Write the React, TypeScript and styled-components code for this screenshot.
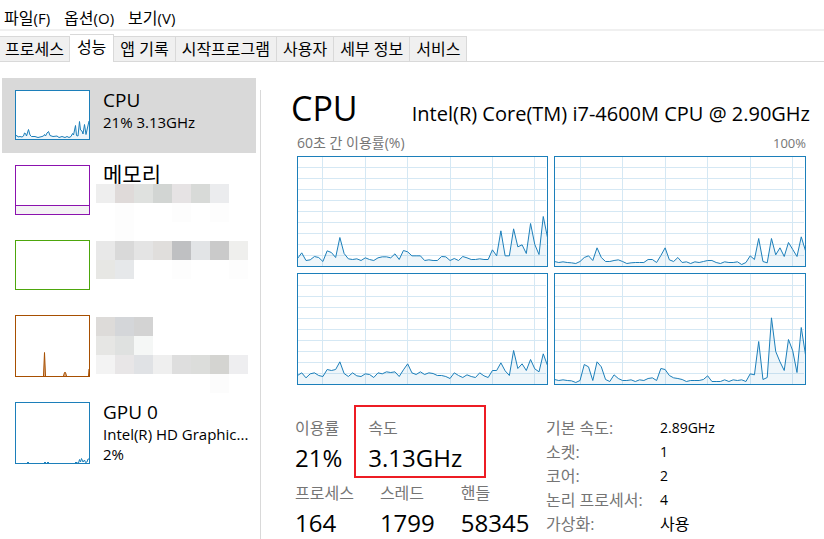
import React from "react";
import styled, { createGlobalStyle, css } from "styled-components";

const LINE = "#1c7fba";

const GlobalStyle = createGlobalStyle`
  *, *::before, *::after { box-sizing: border-box; }
  html { overflow: hidden; }
  body {
    margin: 0;
    background: #fff;
    color: #000;
    font-family: "Open Sans", "Noto Sans CJK KR", sans-serif;
    font-size: 16px;
    font-weight: 400;
  }
  button { font: inherit; color: inherit; margin: 0; cursor: default; }
`;

const Page = styled.div`
  display: flex;
  flex-direction: column;
  min-height: 100vh;
`;

const MenuBar = styled.nav`
  display: flex;
  gap: 14px;
  height: 31px;
  padding: 6px 4px 0;
  border-bottom: 2px solid #f0f0f0;
`;

const MenuButton = styled.button`
  padding: 0;
  border: 0;
  background: none;
  line-height: 24px;
  white-space: nowrap;
`;

const AccessKey = styled.span`
  font-size: 15px;
`;

const TabBar = styled.div`
  display: flex;
  align-items: flex-end;
  height: 31px;
  border-bottom: 1px solid #d9d9d9;
`;

const Tab = styled.button<{ $active?: boolean }>`
  height: 25px;
  padding: 0 6px;
  border: 1px solid #d9d9d9;
  border-width: 1px 1px 0 0;
  background: #f0f0f0;
  line-height: 24px;
  white-space: nowrap;
  &:first-child { padding: 0 5px; }
  ${(p) =>
    p.$active &&
    css`
      height: 28px;
      margin-bottom: -1px;
      padding: 0 7px 3px;
      background: #fff;
    `}
`;

const Body = styled.div`
  display: flex;
  flex: 1;
  padding-top: 16px;
`;

const DeviceList = styled.div`
  position: relative;
  flex: none;
  width: 256px;
  padding-left: 2px;
`;

const Device = styled.button<{ $selected?: boolean }>`
  display: flex;
  align-items: flex-start;
  gap: 13px;
  width: 100%;
  padding: 12px 8px 13px 13px;
  border: 0;
  background: ${(p) => (p.$selected ? "#d9d9d9" : "transparent")};
  text-align: left;
`;

const Thumb = styled.svg<{ $tall?: boolean }>`
  display: block;
  flex: none;
  width: 75px;
  height: ${(p) => (p.$tall ? 62 : 50)}px;
  background: #fff;
`;

const DeviceText = styled.span`
  display: flex;
  flex-direction: column;
  min-width: 0;
  height: 50px;
  font-size: 15px;
  line-height: 20px;
  white-space: nowrap;
`;

const DeviceName = styled.span<{ $hangul?: boolean }>`
  margin-bottom: 2px;
  font-size: ${(p) => (p.$hangul ? 21 : 19)}px;
  line-height: ${(p) => (p.$hangul ? 18 : 20)}px;
`;

const Mosaic = styled.div`
  position: absolute;
  left: 96px;
  top: 106px;
  display: grid;
  grid-template-columns: repeat(8, 19px);
  grid-auto-rows: 19px;
  pointer-events: none;
`;

const Tile = styled.span<{ $color: string }>`
  background: ${(p) => p.$color};
`;

const Details = styled.main`
  flex: 1;
  min-width: 0;
  margin: 12px 0 0 4px;
  padding: 0 18px 0 36px;
  border-left: 1px solid #d9d9d9;
`;

const Header = styled.header`
  display: flex;
  justify-content: space-between;
  align-items: baseline;
  height: 42px;
  margin: 0 -4px 0 -6px;
  line-height: 36px;
  white-space: nowrap;
`;

const Title = styled.h1`
  margin: 0;
  font-size: 34px;
  font-weight: inherit;
`;

const Model = styled.span`
  font-size: 20px;
`;

const Caption = styled.div`
  display: flex;
  justify-content: space-between;
  height: 24px;
  color: #757575;
  font-size: 13px;
  line-height: 22px;
`;

const CaptionName = styled.span`
  font-size: 14px;
`;

const Charts = styled.div`
  display: grid;
  grid-template-columns: 251fr 252fr;
  grid-template-rows: 111px 112px;
  gap: 6px;
`;

const Plot = styled.svg`
  display: block;
  width: 100%;
  height: 100%;
`;

const Footer = styled.div`
  display: flex;
  margin: 31px 0 0 -2px;
`;

const Stats = styled.div`
  display: flex;
  flex-direction: column;
  gap: 5px;
  width: 251px;
`;

const StatRow = styled.dl`
  display: flex;
  gap: 26px;
  margin: 0;
`;

const Stat = styled.div`
  position: relative;
`;

const StatLabel = styled.dt`
  color: #757575;
  line-height: 24px;
`;

const StatValue = styled.dd`
  margin: 0;
  font-size: 24px;
  line-height: 36px;
`;

const Highlight = styled.span`
  position: absolute;
  left: -14px;
  top: -11px;
  width: 132px;
  height: 73px;
  border: 2px solid #ed1c24;
`;

const Specs = styled.dl`
  display: grid;
  grid-template-columns: 114px auto;
  grid-auto-rows: 24px;
  align-content: start;
  margin: 0;
  line-height: 24px;
  white-space: nowrap;
  dt { color: #757575; }
`;

const SpecValue = styled.dd<{ $hangul?: boolean }>`
  margin: 0;
  font-size: ${(p) => (p.$hangul ? 16 : 14)}px;
`;

/* Sixty samples per core, full scale is 333. */
const CORES: { samples: number[]; columns: number[]; firstRow: number; width: number; height: number }[] = [
  {
    width: 251, height: 111, firstRow: 11, columns: [25, 68, 110, 153, 195, 237],
    samples: [24, 41, 18, 20, 30, 27, 15, 47, 42, 27, 87, 39, 23, 21, 23, 18, 26, 21, 18, 26, 29, 29, 26, 38, 21, 48, 44, 32, 32, 32, 18, 20, 18, 18, 30, 29, 18, 24, 18, 30, 26, 21, 21, 23, 21, 21, 50, 32, 107, 32, 32, 113, 59, 65, 39, 129, 66, 36, 150, 87],
  },
  {
    width: 252, height: 111, firstRow: 11, columns: [26, 68, 111, 153, 196, 238],
    samples: [15, 12, 14, 12, 11, 9, 15, 27, 32, 18, 56, 27, 15, 15, 18, 20, 15, 9, 11, 12, 12, 12, 21, 21, 12, 33, 56, 20, 15, 27, 12, 14, 9, 14, 12, 15, 18, 18, 12, 9, 14, 12, 12, 14, 6, 12, 32, 21, 84, 15, 11, 84, 35, 56, 30, 72, 51, 30, 89, 47],
  },
  {
    width: 251, height: 112, firstRow: 12, columns: [25, 68, 110, 153, 195, 237],
    samples: [27, 35, 20, 32, 35, 27, 24, 45, 42, 45, 68, 33, 24, 35, 26, 24, 32, 30, 21, 35, 32, 38, 36, 38, 24, 44, 62, 35, 30, 38, 30, 35, 33, 27, 27, 24, 18, 35, 27, 21, 29, 24, 21, 35, 26, 21, 42, 42, 65, 41, 27, 102, 48, 62, 42, 75, 47, 38, 92, 57],
  },
  {
    width: 252, height: 112, firstRow: 12, columns: [26, 68, 111, 153, 196, 238],
    samples: [15, 12, 14, 12, 11, 6, 12, 60, 53, 12, 68, 53, 15, 9, 29, 18, 12, 12, 14, 9, 14, 12, 18, 20, 12, 48, 45, 27, 20, 18, 15, 9, 12, 12, 12, 15, 26, 9, 9, 9, 14, 9, 14, 12, 14, 9, 32, 29, 129, 15, 21, 200, 99, 68, 42, 135, 101, 36, 171, 89],
  },
];

const ROWS = [0, 1, 2, 3, 4, 5, 6, 7, 8];

function CoreChart({ core }: { core: (typeof CORES)[number] }) {
  const { width: w, height: h } = core;
  const step = (w - 1) / (core.samples.length - 1);
  const pts = core.samples
    .map((v, i) => `${(0.5 + i * step).toFixed(2)},${(h - 0.5 - v / 3).toFixed(2)}`)
    .join(" ");
  return (
    <Plot viewBox={`0 0 ${w} ${h}`} preserveAspectRatio="none" aria-hidden="true">
      <g stroke="#d5e8f4" shapeRendering="crispEdges">
        {core.columns.map((x) => (
          <line key={x} x1={x + 0.5} x2={x + 0.5} y1={1} y2={h - 1} />
        ))}
        {ROWS.map((r) => (
          <line key={r} x1={1} x2={w - 2} y1={core.firstRow + r * 11 + 0.5} y2={core.firstRow + r * 11 + 0.5} />
        ))}
      </g>
      <polygon points={`0.5,${h - 1} ${pts} ${w - 0.5},${h - 1}`} fill="#1c7fba" fillOpacity="0.07" />
      <polyline points={pts} fill="none" stroke={LINE} />
      <rect x="0.5" y="0.5" width={w - 1} height={h - 1} fill="none" stroke={LINE} />
    </Plot>
  );
}

const CPU_THUMB =
  "0.5,46 2,45.5 3,47 5,46.5 7,47 8.5,46 9.5,43 10.5,43.5 11.5,46 13.5,39.5 15,45 16.5,46.5 20,46.5 23,47.5 27,46.5 28.5,46 29.5,44.5 30.5,46 32,43 33.5,41.5 35,45.5 38,46.5 42,46 44,47.5 47,46.5 50,47.5 52,46.5 54,47.5 56,46.5 57.5,43.5 58.5,45 60.5,35.5 61.5,45.5 63,46 64.5,31.5 65.5,40 67,41 68,44 69.5,34.5 71,44.5 72,40 74,31";

const MOSAIC: string[][] = [
  ["#eeeeee", "#dfdad9", "#dfe1df", "#d2d5d3", "#e6e3e4", "#d8dad8", "#ebecee", ""],
  ["", "#fdfdfd", "", "", "#fdfdfd", "", "#fdfdfd", ""],
  ["", "#fdfdfd", "", "", "", "", "", ""],
  ["#e8e8e8", "#d9d9d9", "#e4e4e4", "#e0dedc", "#bfc0c2", "#e2e4e6", "#cacaca", "#efefed"],
  ["#e7e7e4", "#e6e8ea", "", "", "#fdfdfd", "", "", "#fdfdfd"],
  ["", "", "", "", "", "", "", ""],
  ["", "", "", "", "", "", "", ""],
  ["#dddbd9", "#d4d6d9", "#d3d3d3", "", "", "", "", ""],
  ["#e6e6e4", "#dfe1e0", "#f5f7f6", "", "", "", "", ""],
  ["#f3f3f3", "#e8e6e7", "#e0e2e5", "#efefef", "#dedede", "#dcdddb", "#d4d4d1", "#eeeef0"],
  ["", "", "", "", "", "", "#fcfcfc", ""],
];

const MENUS: [string, string][] = [["파일", "F"], ["옵션", "O"], ["보기", "V"]];
const TABS = ["프로세스", "성능", "앱 기록", "시작프로그램", "사용자", "세부 정보", "서비스"];

export default function App() {
  return (
    <Page>
      <GlobalStyle />
      <MenuBar>
        {MENUS.map(([label, key]) => (
          <MenuButton key={key}>
            {label}
            <AccessKey>({key})</AccessKey>
          </MenuButton>
        ))}
      </MenuBar>
      <TabBar role="tablist">
        {TABS.map((label) => (
          <Tab key={label} role="tab" aria-selected={label === "성능"} $active={label === "성능"}>
            {label}
          </Tab>
        ))}
      </TabBar>
      <Body>
        <DeviceList>
          <Device $selected>
            <Thumb viewBox="0 0 75 50" aria-hidden="true">
              <polygon points={`0.5,49 ${CPU_THUMB} 74,49`} fill={LINE} fillOpacity="0.08" />
              <polyline points={CPU_THUMB} fill="none" stroke={LINE} />
              <rect x="0.5" y="0.5" width="74" height="49" fill="none" stroke={LINE} />
            </Thumb>
            <DeviceText>
              <DeviceName>CPU</DeviceName>
              <span>21% 3.13GHz</span>
            </DeviceText>
          </Device>
          <Device>
            <Thumb viewBox="0 0 75 50" aria-hidden="true">
              <rect x="1" y="40" width="73" height="9" fill="#f4f2f4" />
              <path d="M1 40.5H74" stroke="#8b12ae" />
              <rect x="0.5" y="0.5" width="74" height="49" fill="none" stroke="#8b12ae" />
            </Thumb>
            <DeviceText>
              <DeviceName $hangul>메모리</DeviceName>
            </DeviceText>
          </Device>
          <Device aria-label="디스크">
            <Thumb viewBox="0 0 75 50" aria-hidden="true">
              <rect x="0.5" y="0.5" width="74" height="49" fill="none" stroke="#4da60c" />
            </Thumb>
          </Device>
          <Device aria-label="이더넷">
            <Thumb $tall viewBox="0 0 75 62" aria-hidden="true">
              <path
                d="M28.5 61L29.5 37.5L30.5 61M48.5 61L49.5 57.5H50.5L51.5 61M73.5 61L74 54"
                fill="#e3b48c"
                stroke="#a74f01"
              />
              <rect x="0.5" y="0.5" width="74" height="61" fill="none" stroke="#a74f01" />
            </Thumb>
          </Device>
          <Device>
            <Thumb $tall viewBox="0 0 75 62" aria-hidden="true">
              <path
                d="M12 61L13 60L14 61M29 61L30 60L31 61M32 61L33 60L34 61M60 61L61 60L62 61L63.5 61L64.5 57.5L65.5 60L66.5 56.5L68 60L69.5 58L70.5 60.5L72 60L73 57L74 57"
                fill="none"
                stroke={LINE}
              />
              <rect x="0.5" y="0.5" width="74" height="61" fill="none" stroke={LINE} />
            </Thumb>
            <DeviceText>
              <DeviceName>GPU 0</DeviceName>
              <span>Intel(R) HD Graphic...</span>
              <span>2%</span>
            </DeviceText>
          </Device>
          <Mosaic aria-hidden="true">
            {MOSAIC.flatMap((row, y) =>
              row.map((c, x) => <Tile key={`${y}-${x}`} $color={c || "transparent"} />)
            )}
          </Mosaic>
        </DeviceList>
        <Details>
          <Header>
            <Title>CPU</Title>
            <Model>Intel(R) Core(TM) i7-4600M CPU @ 2.90GHz</Model>
          </Header>
          <Caption>
            <CaptionName>60초 간 이용률(%)</CaptionName>
            <span>100%</span>
          </Caption>
          <Charts>
            {CORES.map((core, i) => (
              <CoreChart key={i} core={core} />
            ))}
          </Charts>
          <Footer>
            <Stats>
              <StatRow>
                <Stat>
                  <StatLabel>이용률</StatLabel>
                  <StatValue>21%</StatValue>
                </Stat>
                <Stat>
                  <StatLabel>속도</StatLabel>
                  <StatValue>3.13GHz</StatValue>
                  <Highlight />
                </Stat>
              </StatRow>
              <StatRow>
                <Stat>
                  <StatLabel>프로세스</StatLabel>
                  <StatValue>164</StatValue>
                </Stat>
                <Stat>
                  <StatLabel>스레드</StatLabel>
                  <StatValue>1799</StatValue>
                </Stat>
                <Stat>
                  <StatLabel>핸들</StatLabel>
                  <StatValue>58345</StatValue>
                </Stat>
              </StatRow>
            </Stats>
            <Specs>
              <dt>기본 속도:</dt>
              <SpecValue>2.89GHz</SpecValue>
              <dt>소켓:</dt>
              <SpecValue>1</SpecValue>
              <dt>코어:</dt>
              <SpecValue>2</SpecValue>
              <dt>논리 프로세서:</dt>
              <SpecValue>4</SpecValue>
              <dt>가상화:</dt>
              <SpecValue $hangul>사용</SpecValue>
            </Specs>
          </Footer>
        </Details>
      </Body>
    </Page>
  );
}
